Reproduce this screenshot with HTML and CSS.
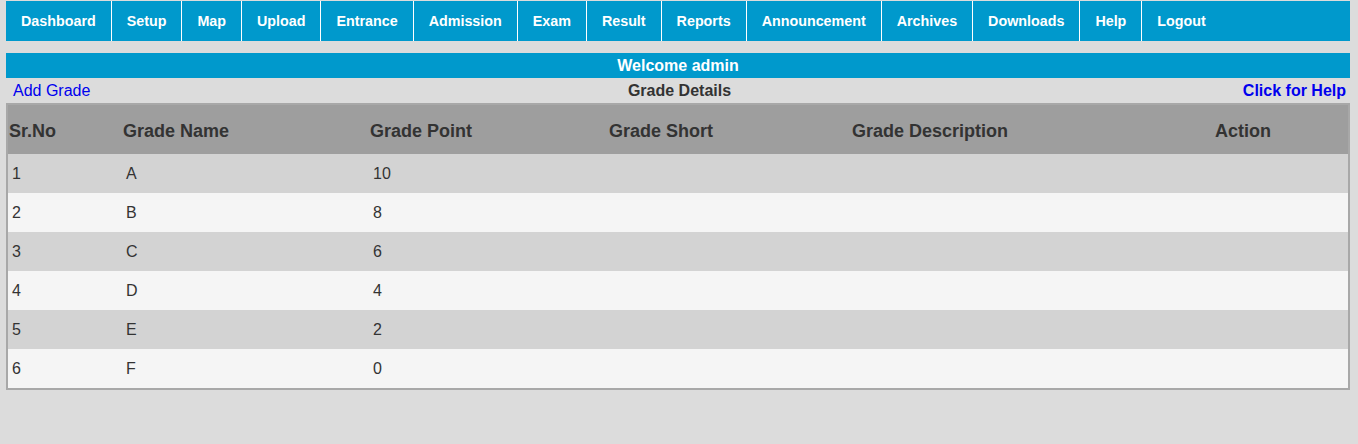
FILE: index.html
```html
<!DOCTYPE html>
<html>
<head>
<meta charset="utf-8">
<title>Grade Details</title>
<link rel="stylesheet" href="styles.css">
</head>
<body>
<div class="page">
  <ul class="nav">
    <li>Dashboard</li>
    <li>Setup</li>
    <li>Map</li>
    <li>Upload</li>
    <li>Entrance</li>
    <li>Admission</li>
    <li>Exam</li>
    <li>Result</li>
    <li>Reports</li>
    <li>Announcement</li>
    <li>Archives</li>
    <li>Downloads</li>
    <li>Help</li>
    <li class="last">Logout</li>
  </ul>
  <div class="welcome">Welcome admin</div>
  <div class="toolbar">
    <a class="add-link" href="#">Add Grade</a>
    <span class="title">Grade Details</span>
    <a class="help-link" href="#">Click for Help</a>
  </div>
  <table class="grades">
    <colgroup>
      <col class="c1"><col class="c2"><col class="c3"><col class="c4"><col class="c5"><col class="c6">
    </colgroup>
    <thead>
      <tr><th>Sr.No</th><th>Grade Name</th><th>Grade Point</th><th>Grade Short</th><th>Grade Description</th><th>Action</th></tr>
    </thead>
    <tbody>
      <tr><td>1</td><td>A</td><td>10</td><td></td><td></td><td></td></tr>
      <tr><td>2</td><td>B</td><td>8</td><td></td><td></td><td></td></tr>
      <tr><td>3</td><td>C</td><td>6</td><td></td><td></td><td></td></tr>
      <tr><td>4</td><td>D</td><td>4</td><td></td><td></td><td></td></tr>
      <tr><td>5</td><td>E</td><td>2</td><td></td><td></td><td></td></tr>
      <tr><td>6</td><td>F</td><td>0</td><td></td><td></td><td></td></tr>
    </tbody>
  </table>
</div>
</body>
</html>
```
FILE: styles.css
```css
html, body {
  margin: 0;
  padding: 0;
  background: #dcdcdc;
  font-family: "Liberation Sans", Arial, sans-serif;
  color: #333;
}
.page {
  padding: 1px 8px 0 6px;
}
.nav {
  list-style: none;
  margin: 0;
  padding: 0;
  display: flex;
  height: 40px;
  background: #0099cc;
}
.nav li {
  color: #fff;
  font-weight: bold;
  font-size: 14.3px;
  line-height: 40px;
  padding: 0 15px;
  border-right: 1px solid #fff;
}
.nav li.last {
  border-right: none;
}
.welcome {
  margin-top: 12px;
  height: 25px;
  line-height: 25px;
  background: #0099cc;
  color: #fff;
  font-weight: bold;
  font-size: 16px;
  text-align: center;
}
.toolbar {
  height: 25px;
  display: flex;
  align-items: center;
  justify-content: space-between;
  padding: 0 4px 0 7px;
  font-size: 16px;
}
.add-link {
  color: #0000ee;
  text-decoration: none;
  flex: 1;
}
.title {
  font-weight: bold;
  color: #333;
}
.help-link {
  color: #0000ee;
  font-weight: bold;
  text-decoration: none;
  flex: 1;
  text-align: right;
}
.grades {
  width: 1344px;
  table-layout: fixed;
  border-collapse: separate;
  border-spacing: 0;
  border: 2px solid #a8a8a8;
}
.c1 { width: 114px; }
.c2 { width: 247px; }
.c3 { width: 239px; }
.c4 { width: 243px; }
.c5 { width: 363px; }
.c6 { width: 134px; }
.grades th {
  background: #9e9e9e;
  height: 49px;
  padding: 3px 0 0 1px;
  box-sizing: border-box;
  text-align: left;
  font-size: 18px;
  font-weight: bold;
  color: #333;
}
.grades td {
  height: 39px;
  padding: 0 0 0 4px;
  font-size: 16px;
  color: #333;
}
.grades tbody tr:nth-child(odd) td { background: #d3d3d3; }
.grades tbody tr:nth-child(even) td { background: #f5f5f5; }
```
